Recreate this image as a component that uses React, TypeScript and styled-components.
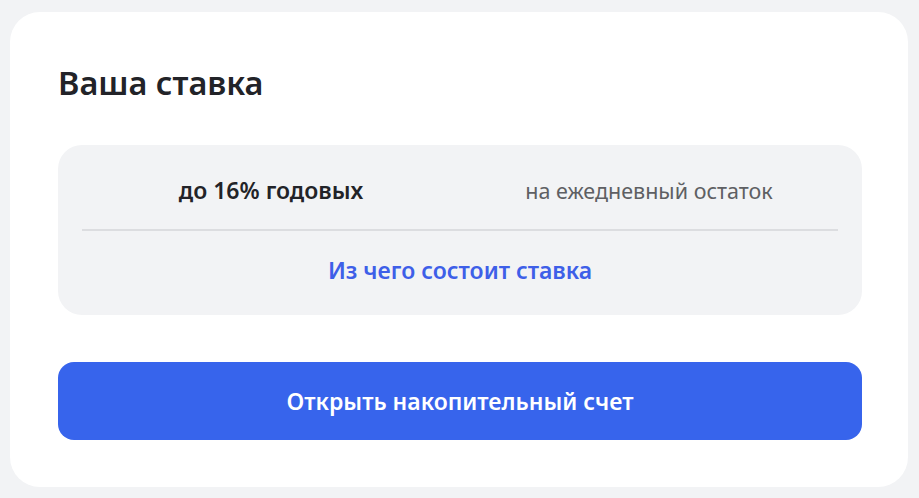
import styled, { createGlobalStyle } from 'styled-components';

const GlobalStyle = createGlobalStyle`
    body {
        margin: 0;
        background: #f2f3f5;
        font-family: 'Noto Sans', 'Open Sans', sans-serif;
    }
`;

const Page = styled.div`
    padding: 12px 11px 11px 10px;
`;

const Card = styled.section`
    background: #ffffff;
    border-radius: 30px;
    padding: 50px 46px 47px 48px;
`;

const Title = styled.h2`
    margin: 0 0 41px;
    font-size: 32.5px;
    line-height: 42px;
    font-weight: 600;
    color: #222328;
`;

const RateBox = styled.div`
    background: #f2f3f5;
    border-radius: 24px;
    padding: 0 24px;
`;

const RateRow = styled.div`
    display: grid;
    grid-template-columns: 1fr 1fr;
    align-items: center;
    height: 86px;
    padding-top: 6px;
    box-sizing: border-box;
    border-bottom: 2px solid #dcdde0;
`;

const RateCell = styled.span<{ $primary?: boolean }>`
    text-align: center;
    font-size: ${({ $primary }) => ($primary ? 23 : 21.5)}px;
    font-weight: ${({ $primary }) => ($primary ? 600 : 400)};
    color: ${({ $primary }) => ($primary ? '#222328' : '#5e5f63')};
`;

const LinkRow = styled.div`
    display: flex;
    align-items: center;
    justify-content: center;
    height: 84px;
    padding-bottom: 6px;
    box-sizing: border-box;
`;

const TextLink = styled.a`
    font-size: 23px;
    font-weight: 600;
    color: #3e5fe8;
    text-decoration: none;
    cursor: pointer;
`;

const OpenButton = styled.button`
    display: block;
    width: 100%;
    height: 78px;
    margin-top: 47px;
    border: none;
    border-radius: 16px;
    background: #3764ec;
    color: #ffffff;
    font-family: inherit;
    font-size: 23px;
    font-weight: 600;
    cursor: pointer;
`;

const App = () => (
    <>
        <GlobalStyle />
        <Page>
            <Card>
                <Title>Ваша ставка</Title>
                <RateBox>
                    <RateRow>
                        <RateCell $primary>до 16% годовых</RateCell>
                        <RateCell>на ежедневный остаток</RateCell>
                    </RateRow>
                    <LinkRow>
                        <TextLink>Из чего состоит ставка</TextLink>
                    </LinkRow>
                </RateBox>
                <OpenButton>Открыть накопительный счет</OpenButton>
            </Card>
        </Page>
    </>
);

export default App;
